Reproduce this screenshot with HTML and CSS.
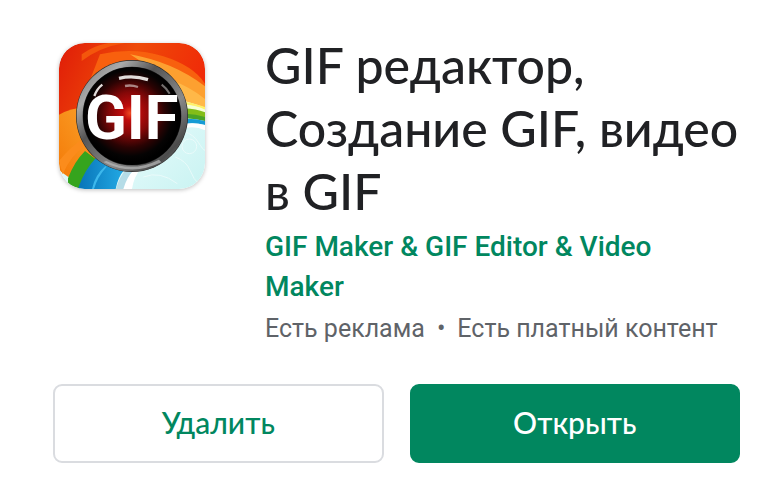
FILE: index.html
```html
<!DOCTYPE html>
<html lang="ru">
<head>
<meta charset="utf-8">
<meta name="viewport" content="width=device-width, initial-scale=1">
<title>GIF редактор</title>
<link rel="stylesheet" href="styles.css">
</head>
<body>
<main class="app">
  <header class="summary">
    <svg class="app-icon" viewBox="27 28 438 438" role="img" aria-label="GIF">
      <defs>
        <clipPath id="tile"><rect x="27" y="28" width="438" height="438" rx="76"/></clipPath>
        <linearGradient id="red" x1="0" y1="0" x2="1" y2="0.3">
          <stop offset="0" stop-color="#e01c08"/><stop offset="0.5" stop-color="#ee4a08"/><stop offset="1" stop-color="#f02a08"/>
        </linearGradient>
        <linearGradient id="orange" x1="0" y1="1" x2="1" y2="0">
          <stop offset="0" stop-color="#f47a08"/><stop offset="1" stop-color="#fba52c"/>
        </linearGradient>
        <linearGradient id="blue" x1="0" y1="0" x2="1" y2="0">
          <stop offset="0" stop-color="#0874b8"/><stop offset="1" stop-color="#22a9e4"/>
        </linearGradient>
        <linearGradient id="sky" x1="0" y1="0" x2="1" y2="1">
          <stop offset="0" stop-color="#d2f3f8"/><stop offset="0.6" stop-color="#e2fafa"/><stop offset="1" stop-color="#c9f3f2"/>
        </linearGradient>
        <linearGradient id="metal" x1="0" y1="0" x2="1" y2="1">
          <stop offset="0" stop-color="#777"/><stop offset="0.2" stop-color="#aaa"/><stop offset="0.38" stop-color="#555"/><stop offset="0.65" stop-color="#8a8a8a"/><stop offset="0.85" stop-color="#4b4b4b"/><stop offset="1" stop-color="#888"/>
        </linearGradient>
        <radialGradient id="lens" cx="0.48" cy="0.47" r="0.5">
          <stop offset="0" stop-color="#f04a22"/><stop offset="0.15" stop-color="#c00c0c"/><stop offset="0.42" stop-color="#860808"/><stop offset="0.7" stop-color="#2b0303"/><stop offset="0.88" stop-color="#050303"/><stop offset="1" stop-color="#000"/>
        </radialGradient>
      </defs>
      <g clip-path="url(#tile)">
        <rect x="27" y="28" width="438" height="438" fill="url(#sky)"/>
        <path d="M27 28H465V205Q400 170 300 160L120 230 27 330Z" fill="url(#red)"/>
        <path d="M95 62Q130 36 175 28H225Q150 40 95 82Z" fill="#f4560c"/>
        <path d="M150 62Q250 40 340 68T465 150V220Q420 200 380 190L250 90Q150 100 100 190Z" fill="#f8600e"/>
        <path d="M240 62Q370 85 465 158V220Q420 200 380 190L330 120Z" fill="#fda030"/>
        <path d="M365 140Q420 160 465 196V222Q420 205 390 200Z" fill="#ffb848"/>
        <path d="M27 243Q60 224 110 220L150 370 55 430 27 410Z" fill="url(#orange)"/>
        <path d="M27 382Q55 345 98 315L108 335Q62 365 38 422Z" fill="#fb8c1c"/>
        <path d="M54 434Q72 385 105 352L145 382Q105 415 88 466H54Z" fill="#35a41d"/>
        <path d="M88 454Q105 408 138 372L222 410Q204 430 197 466H84Z" fill="url(#blue)"/>
        <path d="M126 466Q134 425 166 397L170 399Q142 430 132 466Z" fill="#3db8ec"/>
        <path d="M198 466Q207 430 230 405L260 410Q237 434 233 466Z" fill="#b5dce7"/>
        <path d="M220 466Q230 430 252 408L272 406Q252 428 246 466Z" fill="#fff"/>
        <path d="M395 202Q430 207 465 220V228Q430 214 398 214Z" fill="#fff269"/>
        <path d="M402 212Q435 215 465 228V236Q430 225 404 224Z" fill="#f7ffd3"/>
        <path d="M404 224Q438 226 465 236V260Q438 251 408 250Z" fill="#83bd18"/>
        <path d="M406 240Q438 241 465 250V262Q438 256 408 254Z" fill="#4aa326"/>
        <path d="M408 255Q438 255 465 262V274Q438 267 408 270Z" fill="#169bd5"/>
        <path d="M406 270Q438 266 465 274V290Q435 276 404 284Z" fill="#fff"/>
        <g fill="none" stroke="#fff" stroke-width="3" opacity="0.5">
          <path d="M403 294Q430 302 445 326T465 350"/><path d="M376 370Q410 383 420 410T450 455"/><circle cx="418" cy="338" r="22"/><path d="M280 430Q330 410 382 450"/>
        </g>
        <circle cx="246" cy="247" r="168" fill="#292929"/>
        <circle cx="246" cy="247" r="157" fill="none" stroke="url(#metal)" stroke-width="18"/>
        <circle cx="246" cy="247" r="147" fill="url(#lens)"/>
        <path d="M169 382Q246 419 327 378L334 386Q246 429 160 385Z" fill="#b5b5b5" opacity="0.75"/>
        <g fill="none" stroke="#e2dcda">
          <path d="M207 134Q250 124 294 138" stroke-width="10"/><path d="M225 157Q244 153 264 160" stroke-width="7" opacity="0.6"/><path d="M133 187Q141 165 157 153" stroke-width="7"/><path d="M335 153Q350 164 359 180" stroke-width="6" opacity="0.5"/>
        </g>
        <text class="icon-word" x="245" y="315" text-anchor="middle">GIF</text>
      </g>
    </svg>
    <div class="details">
      <h1 class="title">GIF редактор, Создание GIF, видео в&nbsp;GIF</h1>
      <a class="developer" href="#developer">GIF Maker &amp; GIF Editor &amp; Video Maker</a>
      <p class="notes"><span>Есть реклама</span><span>•</span><span>Есть платный контент</span></p>
    </div>
  </header>
  <div class="actions">
    <button class="button" type="button">Удалить</button>
    <button class="button button-primary" type="button">Открыть</button>
  </div>
</main>
</body>
</html>
```
FILE: styles.css
```css
* {
  box-sizing: border-box;
}

body {
  margin: 0;
  background: #fff;
  color: #202124;
  font-family: Roboto, "Liberation Sans", sans-serif;
}

.app {
  padding: 34px 30px 23px 53px;
}

.summary {
  display: flex;
  align-items: flex-start;
  gap: 60px;
}

.app-icon {
  flex: none;
  width: 146px;
  height: 146px;
  margin: 9px 0 0 6px;
  border-radius: 26px;
  box-shadow: 0 1px 4px rgba(0, 0, 0, 0.25);
}

.icon-word {
  fill: #fff;
  font: bold 184px Roboto, sans-serif;
}

.details {
  flex: 1;
  min-width: 0;
}

.title {
  margin: 0;
  font: 500 50px/63px Lato, "Open Sans", sans-serif;
}

.developer {
  display: block;
  margin-top: 4px;
  padding-right: 30px;
  color: #01875f;
  font-size: 28px;
  font-weight: 500;
  line-height: 40px;
  text-decoration: none;
}

.notes {
  display: flex;
  gap: 12px;
  margin: 6px 0 0;
  color: #5f6368;
  font-size: 25px;
  line-height: 32px;
  white-space: nowrap;
}

.actions {
  display: grid;
  grid-template-columns: 1fr 1fr;
  gap: 26px;
  margin-top: 39px;
}

.button {
  height: 79px;
  padding: 0 0 4px;
  border: 2px solid #dadce0;
  border-radius: 9px;
  background: #fff;
  color: #01875f;
  font: 500 30px/36px Lato, "Open Sans", sans-serif;
}

.button-primary {
  border-color: #01875f;
  background: #01875f;
  color: #fff;
}
```
